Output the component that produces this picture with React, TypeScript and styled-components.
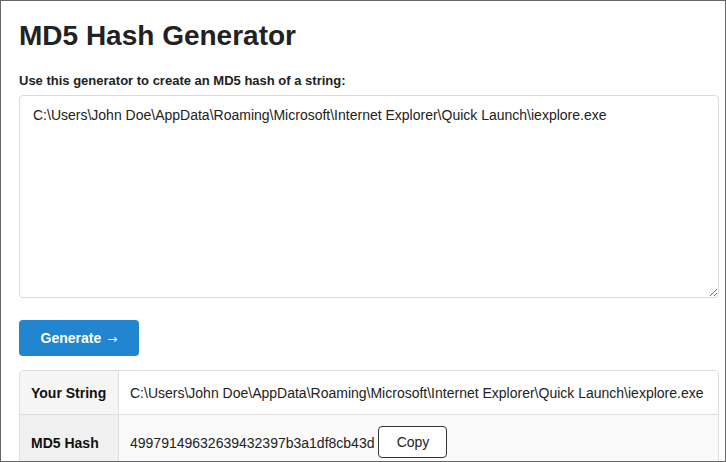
import React from "react";
import styled, { createGlobalStyle } from "styled-components";

const GlobalStyle = createGlobalStyle`
  html, body { margin: 0; padding: 0; background: #fff; }
  * { box-sizing: border-box; }
`;

const Frame = styled.div`
  width: 726px;
  height: 462px;
  border: 1px solid #666;
  overflow: hidden;
  padding: 0 6px 0 18px;
  font-family: "Liberation Sans", Arial, sans-serif;
  color: #222;
`;

const Title = styled.h1`
  margin: 18px 0 0;
  font-size: 28px;
  font-weight: 700;
  line-height: 34px;
  color: #222;
`;

const Label = styled.label`
  display: block;
  margin-top: 20px;
  font-size: 13px;
  font-weight: 700;
  line-height: 16px;
  color: #222;
`;

const Input = styled.textarea`
  display: block;
  margin-top: 6px;
  width: 700px;
  height: 203px;
  border: 1px solid #dcdcdc;
  border-radius: 4px;
  padding: 10px 13px;
  font-family: "Liberation Sans", Arial, sans-serif;
  font-size: 14px;
  line-height: 18px;
  color: #222;
  resize: both;
  outline: none;
`;

const Primary = styled.button`
  display: block;
  margin-top: 22px;
  width: 120px;
  height: 36px;
  border: none;
  border-radius: 4px;
  background: #2185d0;
  color: #fff;
  font-family: "Liberation Sans", Arial, sans-serif;
  font-size: 14px;
  font-weight: 700;
  padding: 0;
  cursor: pointer;
`;

const Arrow = styled.span`
  font-weight: 400;
  margin-left: 6px;
  font-family: "DejaVu Sans", sans-serif;
  font-size: 12px;
`;

const Table = styled.div`
  margin-top: 14px;
  width: 700px;
  border: 1px solid #dedede;
  border-radius: 4px;
  display: grid;
  grid-template-columns: 99px 1fr;
  overflow: hidden;
`;

const Head = styled.div<{ $alt?: boolean }>`
  background: ${(p) => (p.$alt ? "#f0f0f0" : "#f5f5f5")};
  border-right: 1px solid #dedede;
  border-top: ${(p) => (p.$alt ? "1px solid #dedede" : "none")};
  font-size: 14px;
  font-weight: 700;
  color: #111;
  padding: 0 11px;
  display: flex;
  align-items: center;
  height: ${(p) => (p.$alt ? "56px" : "43px")};
`;

const Cell = styled.div<{ $alt?: boolean }>`
  background: ${(p) => (p.$alt ? "#fafafa" : "#fff")};
  border-top: ${(p) => (p.$alt ? "1px solid #dedede" : "none")};
  font-size: 14px;
  color: #222;
  padding: 0 11px;
  display: flex;
  align-items: center;
  gap: 4px;
  height: ${(p) => (p.$alt ? "56px" : "43px")};
  white-space: nowrap;
`;

const CopyButton = styled.button`
  margin-top: -1px;
  width: 69px;
  height: 32px;
  border: 1px solid #333;
  border-radius: 4px;
  background: #fff;
  color: #222;
  font-family: "Liberation Sans", Arial, sans-serif;
  font-size: 14px;
  padding: 0;
`;

const text =
  "C:\\Users\\John Doe\\AppData\\Roaming\\Microsoft\\Internet Explorer\\Quick Launch\\iexplore.exe";

export default function App() {
  return (
    <>
      <GlobalStyle />
      <Frame>
        <Title>MD5 Hash Generator</Title>
        <Label>Use this generator to create an MD5 hash of a string:</Label>
        <Input defaultValue={text} spellCheck={false} />
        <Primary>
          Generate<Arrow>→</Arrow>
        </Primary>
        <Table>
          <Head>Your String</Head>
          <Cell>{text}</Cell>
          <Head $alt>MD5 Hash</Head>
          <Cell $alt>
            49979149632639432397b3a1df8cb43d
            <CopyButton>Copy</CopyButton>
          </Cell>
        </Table>
      </Frame>
    </>
  );
}
